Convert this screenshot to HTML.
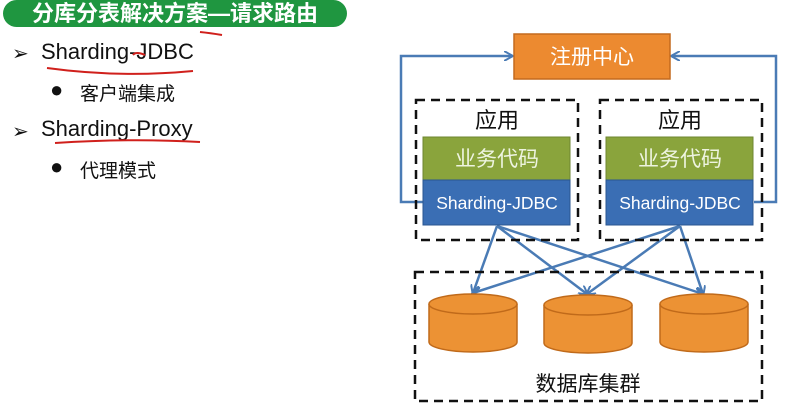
<!DOCTYPE html>
<html><head><meta charset="utf-8"><style>
body{margin:0;width:791px;height:420px;background:#fff;overflow:hidden;position:relative;font-family:"Liberation Sans","Noto Sans CJK SC",sans-serif;}
.pill{position:absolute;left:3px;top:0px;width:344px;height:27px;background:#1f9640;border-radius:14px;color:#fff;font-weight:bold;font-size:22px;line-height:27px;text-align:center;}
.t{position:absolute;color:#111;white-space:nowrap;}
</style></head><body>
<div class="pill">分库分表解决方案—请求路由</div>
<div class="t" style="left:12px;top:41px;font-size:20px;">➢</div>
<div class="t" style="left:41px;top:39px;font-size:22px;">Sharding-JDBC</div>
<div class="t" style="left:50px;top:77px;font-size:22px;">●</div>
<div class="t" style="left:80px;top:79px;font-size:19px;">客户端集成</div>
<div class="t" style="left:12px;top:119px;font-size:20px;">➢</div>
<div class="t" style="left:41px;top:116px;font-size:22px;">Sharding-Proxy</div>
<div class="t" style="left:50px;top:154px;font-size:22px;">●</div>
<div class="t" style="left:80px;top:156px;font-size:19px;">代理模式</div>
<svg width="791" height="420" style="position:absolute;left:0;top:0" xmlns="http://www.w3.org/2000/svg">
<g stroke="#d0201c" stroke-width="2" fill="none">
<path d="M200 32 Q210 33 222 35"/>
<path d="M133 55 Q136 51 145 55"/>
<path d="M47 68 Q120 78 193 71"/>
<path d="M55 143 Q130 138 200 142"/>
</g>
<defs><marker id="a" markerWidth="10" markerHeight="10" refX="8" refY="5" orient="auto" markerUnits="userSpaceOnUse"><path d="M0 0 L9 5 L0 10" fill="none" stroke="#4a7bb5" stroke-width="2"/></marker></defs>
<g stroke="#4a7bb5" stroke-width="2.5" fill="none">
<path d="M423 202 H401 V56 H512" marker-end="url(#a)"/>
<path d="M754 202 H776 V56 H672" marker-end="url(#a)"/>
<path d="M497 226 L473 293" marker-end="url(#a)"/>
<path d="M497 226 L587 294" marker-end="url(#a)"/>
<path d="M497 226 L703 294" marker-end="url(#a)"/>
<path d="M680 226 L473 293" marker-end="url(#a)"/>
<path d="M680 226 L587 294" marker-end="url(#a)"/>
<path d="M680 226 L703 294" marker-end="url(#a)"/>
</g>
<rect x="514" y="34" width="156" height="45" fill="#ec8a30" stroke="#c46a1e" stroke-width="1.5"/>
<g font-family="Liberation Sans,Noto Sans CJK SC,sans-serif" text-anchor="middle">
<text x="592" y="64" font-size="21" fill="#fff">注册中心</text>
<text x="497" y="128" font-size="22" fill="#111">应用</text>
<text x="680" y="128" font-size="22" fill="#111">应用</text>
<rect x="423" y="137" width="147" height="43" fill="#8aa43c" stroke="#6e8630"/>
<rect x="606" y="137" width="147" height="43" fill="#8aa43c" stroke="#6e8630"/>
<rect x="423" y="180" width="147" height="45" fill="#3a6eb4" stroke="#2a5690"/>
<rect x="606" y="180" width="147" height="45" fill="#3a6eb4" stroke="#2a5690"/>
<text x="497" y="166" font-size="21" fill="#eef4e0">业务代码</text>
<text x="680" y="166" font-size="21" fill="#eef4e0">业务代码</text>
<text x="497" y="209" font-size="17.5" fill="#fff">Sharding-JDBC</text>
<text x="680" y="209" font-size="17.5" fill="#fff">Sharding-JDBC</text>
<text x="588" y="391" font-size="21" fill="#111">数据库集群</text>
</g>
<g stroke="#111" stroke-width="2.5" stroke-dasharray="9 6" fill="none">
<rect x="416" y="100" width="162" height="140"/>
<rect x="600" y="100" width="162" height="140"/>
<rect x="415" y="272" width="347" height="129"/>
</g>
<g fill="#ec9234" stroke="#c06a1a" stroke-width="1.5">
<path d="M429 304 V342 A44 10 0 0 0 517 342 V304"/><ellipse cx="473" cy="304" rx="44" ry="10"/>
<path d="M544 305 V343 A44 10 0 0 0 632 343 V305"/><ellipse cx="588" cy="305" rx="44" ry="10"/>
<path d="M660 304 V342 A44 10 0 0 0 748 342 V304"/><ellipse cx="704" cy="304" rx="44" ry="10"/>
</g>
</svg>
</body></html>
